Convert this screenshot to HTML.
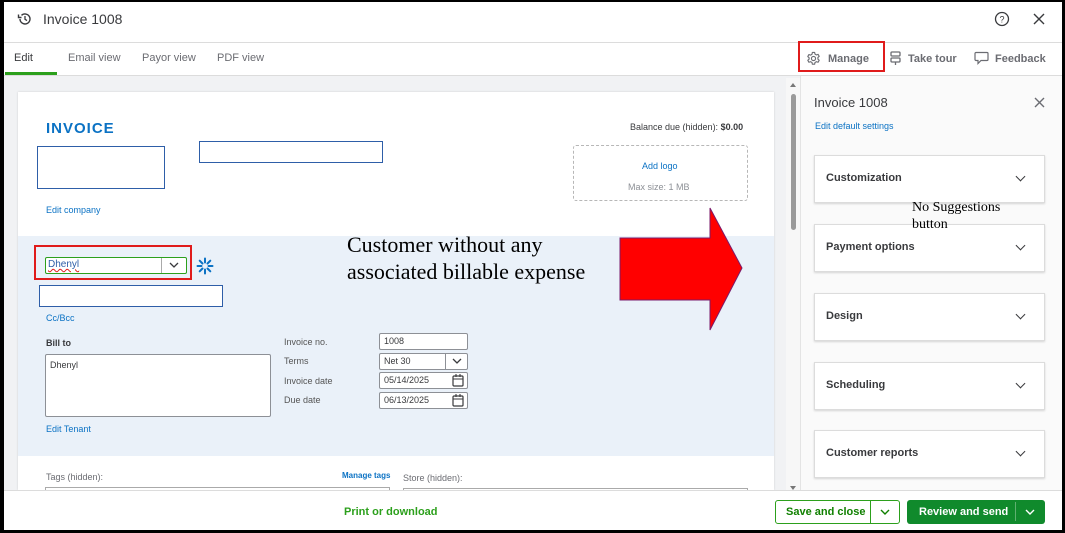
<!DOCTYPE html>
<html><head><style>
*{box-sizing:border-box;margin:0;padding:0}
body{width:1065px;height:533px;overflow:hidden;background:#fff;font-family:"Liberation Sans",sans-serif;position:relative;color:#393a3d}
.a{position:absolute}
.lnk{color:#0b72c4;font-size:10px}
.lbl{font-size:10px;color:#555}
.inp{position:absolute;border:1px solid #8d9096;border-radius:2px;background:#fff;font-size:10px;padding:2px 4px;color:#393a3d}
.card{position:absolute;left:814px;width:231px;height:48px;background:#fff;border:1px solid #dcdcdc;box-shadow:0 1px 2px rgba(0,0,0,.15);font-size:11px;font-weight:bold;color:#393a3d;padding:16px 11px}
.card:after{content:"";position:absolute;right:20px;top:17px;width:6px;height:6px;border-right:1.5px solid #393a3d;border-bottom:1.5px solid #393a3d;transform:rotate(45deg)}
.blue{border:1px solid #2e5ea8}
</style></head><body>
<div class="a" style="left:0;top:0;width:1065px;height:533px;border:2px solid #000;border-left:4px solid #000;border-bottom:3px solid #000;border-right:3px solid #000;z-index:20;pointer-events:none"></div>
<svg class="a" style="left:17px;top:11px" width="16" height="16" viewBox="0 0 16 16"><path d="M3 8a5 5 0 1 0 1.5-3.6" fill="none" stroke="#393a3d" stroke-width="1.4"/><path d="M1.5 3.5v3h3" fill="none" stroke="#393a3d" stroke-width="1.4"/><path d="M8 5v3.3l2 1.3" fill="none" stroke="#393a3d" stroke-width="1.3"/></svg>
<div class="a" style="left:43px;top:11px;font-size:14px;color:#393a3d">Invoice 1008</div>
<svg class="a" style="left:994px;top:11px" width="16" height="16" viewBox="0 0 16 16"><circle cx="8" cy="8" r="6.5" fill="none" stroke="#393a3d" stroke-width="1.3"/><text x="8" y="11.5" font-size="9" text-anchor="middle" fill="#393a3d" font-family="Liberation Sans">?</text></svg>
<svg class="a" style="left:1033px;top:13px" width="12" height="12"><path d="M1 1L11 11M11 1L1 11" stroke="#393a3d" stroke-width="1.4"/></svg>
<div class="a" style="left:4px;top:42px;width:1058px;height:1px;background:#dcdcdc"></div>
<div class="a" style="left:14px;top:52px;font-size:11px;color:#393a3d">Edit</div>
<div class="a" style="left:5px;top:72px;width:52px;height:3px;background:#2ca01c"></div>
<div class="a" style="left:68px;top:52px;font-size:11px;color:#6b6c72">Email view</div>
<div class="a" style="left:142px;top:52px;font-size:11px;color:#6b6c72">Payor view</div>
<div class="a" style="left:217px;top:52px;font-size:11px;color:#6b6c72">PDF view</div>
<div class="a" style="left:798px;top:41px;width:87px;height:31px;border:2px solid #e01b1b"></div>
<svg class="a" style="left:806px;top:51px" width="15" height="15" viewBox="0 0 16 16"><path d="M6.8 1.5h2.4l.4 1.8 1.5.9 1.8-.6 1.2 2.1-1.4 1.2v1.8l1.4 1.2-1.2 2.1-1.8-.6-1.5.9-.4 1.8H6.8l-.4-1.8-1.5-.9-1.8.6-1.2-2.1 1.4-1.2V7.1L1.9 5.9l1.2-2.1 1.8.6 1.5-.9z" fill="none" stroke="#6b6c72" stroke-width="1.2" stroke-linejoin="round"/><circle cx="8" cy="8" r="2.2" fill="none" stroke="#6b6c72" stroke-width="1.2"/></svg>
<div class="a" style="left:828px;top:53px;font-size:11px;font-weight:bold;color:#6b6c72">Manage</div>
<svg class="a" style="left:889px;top:51px" width="13" height="15" viewBox="0 0 13 15"><rect x="2" y="1" width="9" height="4" rx="1" fill="none" stroke="#6b6c72" stroke-width="1.3"/><rect x="2" y="7" width="9" height="4" rx="1" fill="none" stroke="#6b6c72" stroke-width="1.3"/><path d="M6.5 11v3" stroke="#6b6c72" stroke-width="1.3"/></svg>
<div class="a" style="left:908px;top:53px;font-size:11px;font-weight:bold;color:#6b6c72">Take tour</div>
<svg class="a" style="left:974px;top:51px" width="15" height="14" viewBox="0 0 15 14"><path d="M2 1.5h11a1 1 0 0 1 1 1v6a1 1 0 0 1-1 1H7l-3 3v-3H2a1 1 0 0 1-1-1v-6a1 1 0 0 1 1-1z" fill="none" stroke="#6b6c72" stroke-width="1.2"/></svg>
<div class="a" style="left:995px;top:53px;font-size:11px;font-weight:bold;color:#6b6c72">Feedback</div>
<div class="a" style="left:4px;top:75px;width:1058px;height:1px;background:#dcdcdc"></div>
<div class="a" style="left:4px;top:76px;width:796px;height:414px;background:#f1f2f4"></div>
<div class="a" style="left:18px;top:92px;width:756px;height:398px;background:#fff;box-shadow:0 0 2px rgba(0,0,0,.15)"></div>
<div class="a" style="left:46px;top:120px;font-size:15px;font-weight:bold;color:#0b72c4;letter-spacing:1px">INVOICE</div>
<div class="a blue" style="left:37px;top:146px;width:128px;height:43px"></div>
<div class="a blue" style="left:199px;top:141px;width:184px;height:22px"></div>
<div class="a lnk" style="left:46px;top:205px;font-size:9px">Edit company</div>
<div class="a" style="left:630px;top:122px;font-size:9px;color:#393a3d">Balance due (hidden): <b>$0.00</b></div>
<div class="a" style="left:573px;top:145px;width:175px;height:56px;border:1px dashed #b7b7b7;border-radius:3px"></div>
<div class="a lnk" style="left:642px;top:161px;font-size:9px">Add logo</div>
<div class="a" style="left:628px;top:182px;font-size:9px;color:#8d9096">Max size: 1 MB</div>
<div class="a" style="left:18px;top:236px;width:756px;height:220px;background:#eaf1f9"></div>
<div class="a" style="left:34px;top:245px;width:158px;height:35px;border:2px solid #e01b1b"></div>
<div class="a" style="left:45px;top:257px;width:142px;height:17px;border:1.5px solid #2ca01c;border-radius:2px;background:#fff"></div>
<div class="a" style="left:48px;top:259px;font-size:10px;color:#2e5ea8;text-decoration:underline wavy #e01b1b">Dhenyl</div>
<div class="a" style="left:161px;top:258px;width:1px;height:15px;background:#aaa"></div>
<svg class="a" style="left:169px;top:262px" width="10" height="7"><path d="M1 1l4 4 4-4" fill="none" stroke="#393a3d" stroke-width="1.3"/></svg>
<svg class="a" style="left:196px;top:257px" width="18" height="18" viewBox="0 0 18 18"><g stroke="#0b72c4" stroke-width="2" stroke-linecap="round"><path d="M9 1.5v4M9 12.5v4M1.5 9h4M12.5 9h4M3.7 3.7l2.8 2.8M11.5 11.5l2.8 2.8M3.7 14.3l2.8-2.8M11.5 6.5l2.8-2.8"/></g></svg>
<div class="a blue" style="left:39px;top:285px;width:184px;height:22px;background:#fff"></div>
<div class="a lnk" style="left:46px;top:313px;font-size:9px">Cc/Bcc</div>
<div class="a" style="left:46px;top:338px;font-size:9px;font-weight:bold;color:#393a3d">Bill to</div>
<div class="inp" style="left:45px;top:354px;width:226px;height:63px;font-size:9px;padding:5px 4px">Dhenyl</div>
<div class="a lnk" style="left:46px;top:424px;font-size:9px">Edit Tenant</div>
<div class="a lbl" style="left:284px;top:337px;font-size:9px">Invoice no.</div>
<div class="a lbl" style="left:284px;top:356px;font-size:9px">Terms</div>
<div class="a lbl" style="left:284px;top:376px;font-size:9px">Invoice date</div>
<div class="a lbl" style="left:284px;top:395px;font-size:9px">Due date</div>
<div class="inp" style="left:379px;top:333px;width:89px;height:17px;font-size:9px">1008</div>
<div class="inp" style="left:379px;top:353px;width:89px;height:17px;font-size:9px">Net 30</div>
<div class="a" style="left:445px;top:354px;width:1px;height:15px;background:#8d9096"></div>
<svg class="a" style="left:452px;top:358px" width="10" height="7"><path d="M1 1l4 4 4-4" fill="none" stroke="#393a3d" stroke-width="1.3"/></svg>
<div class="inp" style="left:379px;top:372px;width:89px;height:17px;font-size:9px">05/14/2025</div>
<div class="inp" style="left:379px;top:392px;width:89px;height:17px;font-size:9px">06/13/2025</div>
<svg class="a" style="left:452px;top:374px" width="12" height="13"><rect x="1" y="2" width="10" height="10" rx="1" fill="none" stroke="#393a3d" stroke-width="1.2"/><path d="M1 5h10M4 0v3M8 0v3" stroke="#393a3d" stroke-width="1.1"/></svg>
<svg class="a" style="left:452px;top:394px" width="12" height="13"><rect x="1" y="2" width="10" height="10" rx="1" fill="none" stroke="#393a3d" stroke-width="1.2"/><path d="M1 5h10M4 0v3M8 0v3" stroke="#393a3d" stroke-width="1.1"/></svg>
<div class="a" style="left:347px;top:231px;font-family:'Liberation Serif',serif;font-size:22px;line-height:27px;color:#000">Customer without any<br>associated billable expense</div>
<svg class="a" style="left:618px;top:206px" width="126" height="126"><polygon points="2,32 92,32 92,2 124,62 92,124 92,94 2,94" fill="#ff0000" stroke="#7a1a6a" stroke-width="1"/></svg>
<div class="a lbl" style="left:46px;top:472px;font-size:9px;color:#6b6c72">Tags (hidden):</div>
<div class="a" style="left:342px;top:471px;font-size:8px;font-weight:bold;color:#0b72c4">Manage tags</div>
<div class="a lbl" style="left:403px;top:473px;font-size:9px;color:#6b6c72">Store (hidden):</div>
<div class="a" style="left:45px;top:487px;width:345px;height:3px;border:1px solid #aaa;border-bottom:none"></div>
<div class="a" style="left:403px;top:488px;width:345px;height:2px;border:1px solid #aaa;border-bottom:none"></div>
<div class="a" style="left:786px;top:78px;width:14px;height:412px;background:#f7f7f7"></div>
<div class="a" style="left:791px;top:94px;width:5px;height:136px;background:#9a9a9a;border-radius:3px"></div>
<div class="a" style="left:790px;top:83px;width:0;height:0;border-left:3px solid transparent;border-right:3px solid transparent;border-bottom:4px solid #777"></div>
<div class="a" style="left:790px;top:486px;width:0;height:0;border-left:3px solid transparent;border-right:3px solid transparent;border-top:4px solid #777"></div>
<div class="a" style="left:800px;top:76px;width:262px;height:414px;background:#fafafa;border-left:1px solid #e4e4e4"></div>
<div class="a" style="left:814px;top:95px;font-size:13px;color:#393a3d">Invoice 1008</div>
<svg class="a" style="left:1034px;top:97px" width="11" height="11"><path d="M1 1L10 10M10 1L1 10" stroke="#6b6c72" stroke-width="1.4"/></svg>
<div class="a lnk" style="left:815px;top:121px;font-size:9px">Edit default settings</div>
<div class="card" style="top:155px">Customization</div>
<div class="card" style="top:224px">Payment options</div>
<div class="card" style="top:293px">Design</div>
<div class="card" style="top:362px">Scheduling</div>
<div class="card" style="top:430px">Customer reports</div>
<div class="a" style="left:912px;top:199px;font-family:'Liberation Serif',serif;font-size:14px;line-height:17px;color:#000">No Suggestions<br>button</div>
<div class="a" style="left:4px;top:490px;width:1058px;height:40px;background:#fff;border-top:1px solid #dcdcdc"></div>
<div class="a" style="left:344px;top:506px;font-size:11px;font-weight:bold;color:#2ca01c">Print or download</div>
<div class="a" style="left:775px;top:500px;width:125px;height:24px;border:1px solid #2ca01c;border-radius:3px"></div>
<div class="a" style="left:786px;top:506px;font-size:11px;font-weight:bold;color:#108000">Save and close</div>
<div class="a" style="left:870px;top:501px;width:1px;height:22px;background:#2ca01c"></div>
<svg class="a" style="left:880px;top:509px" width="10" height="7"><path d="M1 1l4 4 4-4" fill="none" stroke="#108000" stroke-width="1.4"/></svg>
<div class="a" style="left:907px;top:500px;width:138px;height:24px;background:#108a2c;border-radius:3px"></div>
<div class="a" style="left:919px;top:506px;font-size:11px;font-weight:bold;color:#fff">Review and send</div>
<div class="a" style="left:1015px;top:502px;width:1px;height:19px;background:#5fb070"></div>
<svg class="a" style="left:1025px;top:509px" width="10" height="7"><path d="M1 1l4 4 4-4" fill="none" stroke="#fff" stroke-width="1.4"/></svg>
</body></html>
